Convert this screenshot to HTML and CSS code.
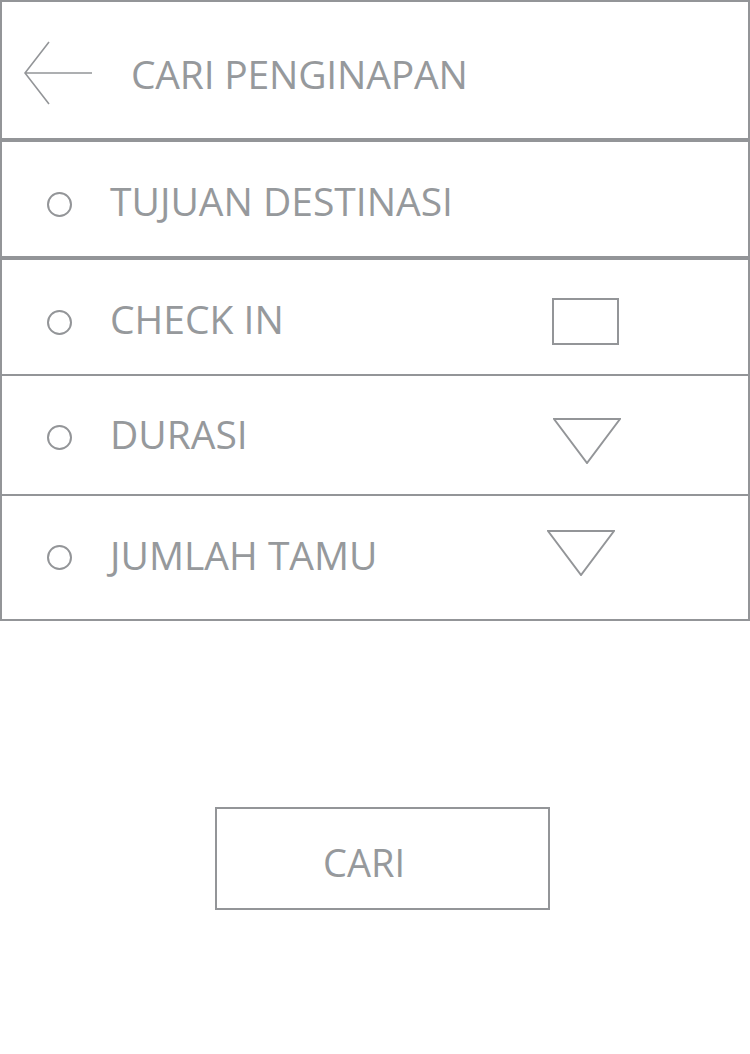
FILE: index.html
```html
<!DOCTYPE html>
<html lang="id">
<head>
<meta charset="utf-8">
<title>Cari Penginapan</title>
<link rel="stylesheet" href="styles.css">
</head>
<body>
<div class="page">
  <header class="header">
    <svg class="back" width="70" height="64" viewBox="0 0 70 64" aria-hidden="true">
      <path d="M25 1 L1 32 L25 63 M1 32 L68 32" fill="none" stroke="#939598" stroke-width="1.6"/>
    </svg>
    <h1 class="title">CARI PENGINAPAN</h1>
  </header>

  <div class="row row-dest">
    <span class="dot"></span>
    <span class="label">TUJUAN DESTINASI</span>
  </div>

  <div class="group">
    <div class="row row-check">
      <span class="dot"></span>
      <span class="label">CHECK IN</span>
      <span class="box"></span>
    </div>
    <div class="row row-durasi">
      <span class="dot"></span>
      <span class="label">DURASI</span>
      <svg class="tri" width="68" height="46" viewBox="0 0 68 46" aria-hidden="true">
        <path d="M1 1 L67 1 L34 45 Z" fill="none" stroke="#939598" stroke-width="2"/>
      </svg>
    </div>
    <div class="row row-tamu">
      <span class="dot"></span>
      <span class="label">JUMLAH TAMU</span>
      <svg class="tri" width="68" height="46" viewBox="0 0 68 46" aria-hidden="true">
        <path d="M1 1 L67 1 L34 45 Z" fill="none" stroke="#939598" stroke-width="2"/>
      </svg>
    </div>
  </div>

  <div class="actions">
    <button class="btn" type="button">CARI</button>
  </div>
</div>
</body>
</html>
```

FILE: styles.css
```css
html, body {
  margin: 0;
  padding: 0;
  background: #ffffff;
}

body {
  font-family: "Open Sans", "Noto Sans", sans-serif;
  color: #96999c;
}

.page {
  width: 750px;
}

.header {
  box-sizing: border-box;
  width: 750px;
  height: 140px;
  border: 2px solid #939598;
  display: flex;
  align-items: center;
  padding-left: 22px;
}

.back {
  display: block;
  margin-top: 6px;
}

.title {
  margin: 6px 0 0 37px;
  font-weight: 400;
  font-size: 39px;
  letter-spacing: -0.2px;
  line-height: 1;
}

.row {
  box-sizing: border-box;
  width: 750px;
  display: flex;
  align-items: center;
  border-left: 2px solid #939598;
  border-right: 2px solid #939598;
  border-bottom: 2px solid #939598;
  padding-left: 45px;
}

.row-dest {
  height: 118px;
  border-top: 2px solid #939598;
  padding-top: 10px;
}

.group .row-check {
  height: 118px;
  border-top: 2px solid #939598;
  padding-top: 10px;
}

.row-durasi {
  height: 120px;
  padding-top: 4px;
}

.row-tamu {
  height: 125px;
  padding-top: 0;
}

.dot {
  box-sizing: border-box;
  width: 25px;
  height: 25px;
  border: 2px solid #939598;
  border-radius: 50%;
  flex: none;
}

.label {
  margin-left: 38px;
  margin-bottom: 7px;
  font-size: 39px;
  font-weight: 400;
  letter-spacing: 0;
  line-height: 1;
  flex: 1;
}

.box {
  box-sizing: border-box;
  width: 67px;
  height: 47px;
  border: 2px solid #939598;
  margin-right: 129px;
  margin-top: -2px;
  flex: none;
}

.tri {
  display: block;
  flex: none;
}

.row-durasi .tri {
  margin-right: 127px;
  margin-top: 8px;
}

.row-tamu .tri {
  margin-right: 133px;
  margin-top: -10px;
}

.actions {
  padding-top: 186px;
  padding-left: 215px;
}

.btn {
  box-sizing: border-box;
  width: 335px;
  height: 103px;
  border: 2px solid #939598;
  background: #ffffff;
  color: #96999c;
  font-family: "Open Sans", "Noto Sans", sans-serif;
  font-size: 38px;
  font-weight: 400;
  text-align: left;
  padding: 6px 0 0 106px;
  line-height: 1;
  margin: 0;
}
```
